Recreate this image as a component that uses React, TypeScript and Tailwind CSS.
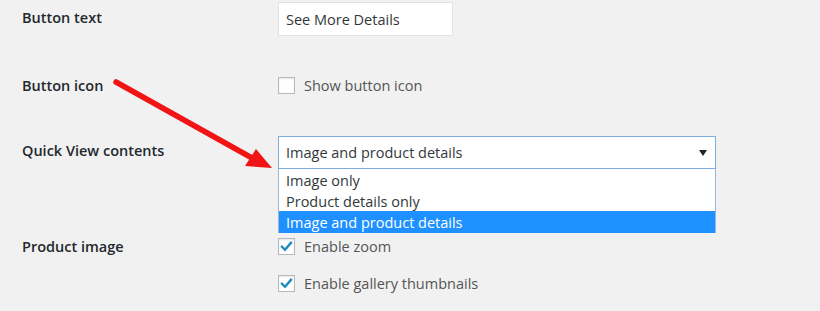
import React from "react";

const font = { fontFamily: '"Open Sans", "Noto Sans", sans-serif' };

function Check({ checked }: { checked?: boolean }) {
  return (
    <div className="w-[17px] h-[17px] border border-[#b4b9be] bg-white shadow-[inset_0_1px_2px_rgba(0,0,0,0.1)] flex items-center justify-center shrink-0">
      {checked && (
        <svg width="13" height="13" viewBox="0 0 13 13">
          <path d="M2 6.8 L5 9.8 L11 2.8" fill="none" stroke="#1e8cbe" strokeWidth="2.4" strokeLinecap="square" />
        </svg>
      )}
    </div>
  );
}

export default function App() {
  return (
    <div className="relative w-[820px] h-[311px] bg-[#f1f1f1] overflow-hidden text-[#23282d]" style={font}>
      <div className="pl-[22px] pt-[2px] flex flex-col">
        {/* Row 1 */}
        <div className="flex items-start">
          <div className="w-[256px] pt-[6px] text-[14.5px] font-semibold leading-[20px]">Button text</div>
          <div className="w-[175px] h-[34px] bg-white border border-[#e2e2e2] flex items-center px-[7px] text-[14.5px] text-[#32373c] pt-[1px]">
            See More Details
          </div>
        </div>
        {/* Row 2 */}
        <div className="flex items-center mt-[41px] h-[17px]">
          <div className="w-[256px] text-[14.5px] font-semibold leading-[20px]">Button icon</div>
          <Check />
          <span className="ml-[9px] text-[14.5px] text-[#555] leading-[20px]">Show button icon</span>
        </div>
        {/* Row 3 */}
        <div className="flex items-start mt-[42px]">
          <div className="w-[256px] pt-[5px] text-[14.5px] font-semibold leading-[20px]">Quick View contents</div>
          <div className="relative w-[438px]">
            <div className="h-[33px] bg-white border border-[#7eaee0] flex items-center justify-between pl-[7px] pr-[8px] text-[14.5px] text-[#32373c] pt-[1px]">
              <span>Image and product details</span>
              <svg width="8" height="6" viewBox="0 0 8 6">
                <path d="M0 0 L8 0 L4 6 Z" fill="#222" />
              </svg>
            </div>
            <div className="absolute left-0 top-[33px] w-full bg-white border-x border-[#9ab7d6] text-[14.5px] text-[#32373c] leading-[21px] z-10">
              <div className="pl-[7px] h-[21px] pt-[1px]">Image only</div>
              <div className="pl-[7px] h-[21px] pt-[1px]">Product details only</div>
              <div className="pl-[7px] h-[22px] pt-[1px] bg-[#1e90ff] text-white">Image and product details</div>
            </div>
          </div>
        </div>
        {/* Row 4 */}
        <div className="flex items-start mt-[69px]">
          <div className="w-[256px] text-[14.5px] font-semibold leading-[20px] -mt-[1px]">Product image</div>
          <div className="flex flex-col gap-[20px]">
            <div className="flex items-center h-[17px]">
              <Check checked />
              <span className="ml-[9px] text-[14.5px] text-[#555] leading-[20px]">Enable zoom</span>
            </div>
            <div className="flex items-center h-[17px]">
              <Check checked />
              <span className="ml-[9px] text-[14.5px] text-[#555] leading-[20px]">Enable gallery thumbnails</span>
            </div>
          </div>
        </div>
      </div>
      {/* Annotation arrow */}
      <svg className="absolute left-0 top-0 pointer-events-none" width="820" height="311" viewBox="0 0 820 311">
        <line x1="116" y1="82" x2="252" y2="158" stroke="#f01414" strokeWidth="5.5" strokeLinecap="round" />
        <path d="M245 166 L256 149 L272 168 Z" fill="#f01414" />
      </svg>
    </div>
  );
}
